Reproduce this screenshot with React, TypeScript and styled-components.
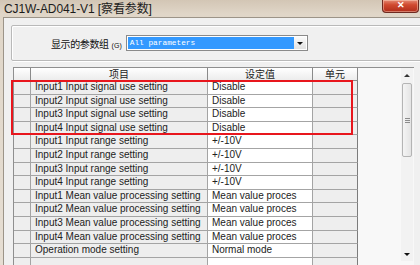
import React from 'react';
import styled, { createGlobalStyle } from 'styled-components';

const GlobalStyle = createGlobalStyle`
  html, body {
    margin: 0;
    padding: 0;
    background: #e2d9cc;
  }
  body {
    font-family: 'Liberation Sans', 'Noto Sans CJK SC', sans-serif;
  }
`;

interface IParam {
  name: string;
  value: string;
  unit?: string;
}

const params: IParam[] = [
  { name: 'Input1 Input signal use setting', value: 'Disable' },
  { name: 'Input2 Input signal use setting', value: 'Disable' },
  { name: 'Input3 Input signal use setting', value: 'Disable' },
  { name: 'Input4 Input signal use setting', value: 'Disable' },
  { name: 'Input1 Input range setting', value: '+/-10V' },
  { name: 'Input2 Input range setting', value: '+/-10V' },
  { name: 'Input3 Input range setting', value: '+/-10V' },
  { name: 'Input4 Input range setting', value: '+/-10V' },
  { name: 'Input1 Mean value processing setting', value: 'Mean value proces' },
  { name: 'Input2 Mean value processing setting', value: 'Mean value proces' },
  { name: 'Input3 Mean value processing setting', value: 'Mean value proces' },
  { name: 'Input4 Mean value processing setting', value: 'Mean value proces' },
  { name: 'Operation mode setting', value: 'Normal mode' },
  { name: '', value: '' },
];

const ROW_H = 13.6;
const COLS = '17px 177px 105px 45px 1fr';

const Style = {
  Window: styled.div`
    width: 420px;
    height: 265px;
    overflow: hidden;
    display: flex;
    flex-direction: column;
    background: linear-gradient(180deg, #d3c6b5 0%, #e0d6c8 14px, #e6ded3 100%);
  `,
  TitleBar: styled.div`
    height: 17px;
    flex: none;
    display: flex;
    justify-content: space-between;
    align-items: flex-start;
  `,
  Title: styled.span`
    padding: 2px 0 0 4px;
    font-size: 12px;
    line-height: 14px;
    color: #1b1b1b;
    letter-spacing: -0.1px;
  `,
  Close: styled.div`
    width: 35px;
    height: 12px;
    margin-right: 1px;
    border: 1px solid #6e2a20;
    border-top: none;
    border-radius: 0 0 4px 4px;
    background: linear-gradient(180deg, #e58a74 0%, #d04a30 40%, #b02c1a 100%);
    color: #fff;
    font-size: 9px;
    line-height: 11px;
    font-weight: bold;
    text-align: center;
    box-shadow: inset 0 0 0 1px rgba(255, 220, 200, 0.45);
  `,
  Client: styled.div`
    flex: 1;
    margin-left: 3px;
    border-top: 1px solid #9c9488;
    border-left: 1px solid #9c9488;
    background: #f0f0f0;
    padding: 7px 0 0 7px;
  `,
  GroupBox: styled.div`
    width: 401px;
    height: 34px;
    border: 1px solid #b9b9b9;
    border-radius: 2px;
    box-shadow: inset 1px 1px 0 #fff, 1px 1px 0 #fff;
    display: flex;
    align-items: center;
    padding-left: 39px;
    box-sizing: content-box;
  `,
  Label: styled.span`
    font-family: 'Noto Sans CJK SC', sans-serif;
    font-size: 10px;
    letter-spacing: -0.4px;
    color: #111;
    display: flex;
    align-items: baseline;
  `,
  Mnemonic: styled.span`
    font-family: 'Liberation Sans', sans-serif;
    font-size: 7px;
    margin-left: 3px;
    letter-spacing: 0;
  `,
  Combo: styled.div`
    margin-left: 4px;
    width: 182px;
    height: 16px;
    border: 1px solid #8a8a8a;
    background: #fff;
    display: flex;
    padding: 1px;
    box-sizing: border-box;
  `,
  ComboText: styled.div`
    flex: 1;
    background: #3399ff;
    color: #fff;
    font-family: 'Liberation Mono', monospace;
    font-size: 7.8px;
    line-height: 12px;
    padding-left: 2px;
  `,
  ComboButton: styled.div`
    width: 12px;
    display: flex;
    align-items: center;
    justify-content: center;
    background: linear-gradient(180deg, #fafafa, #e2e2e2);
  `,
  Arrow: styled.div<{ up?: boolean }>`
    width: 0;
    height: 0;
    border-left: 3px solid transparent;
    border-right: 3px solid transparent;
    ${({ up }) =>
      up ? 'border-bottom: 3px solid #333;' : 'border-top: 3px solid #111;'}
  `,
  TableBox: styled.div`
    margin: 6px 0 0 2px;
    width: 401px;
    height: 200px;
    display: flex;
    border-left: 1px solid #8f8f8f;
    border-top: 1px solid #8f8f8f;
    box-sizing: border-box;
    background: #f8f8f8;
  `,
  Grid: styled.div`
    position: relative;
    flex: 1;
    display: grid;
    grid-template-columns: ${COLS};
    grid-auto-rows: ${ROW_H}px;
    grid-template-rows: 13px;
    align-content: start;
  `,
  Head: styled.div<{ filler?: boolean }>`
    box-sizing: border-box;
    border-right: ${({ filler }) => (filler ? 'none' : '1px solid #8a8a8a')};
    border-bottom: ${({ filler }) => (filler ? 'none' : '1px solid #8a8a8a')};
    background: ${({ filler }) =>
      filler ? 'transparent' : 'linear-gradient(180deg, #ffffff, #ececec)'};
    font-family: 'Noto Sans CJK SC', sans-serif;
    font-size: 10px;
    line-height: 12px;
    text-align: center;
    color: #222;
    white-space: nowrap;
  `,
  Cell: styled.div<{ white?: boolean; dark?: boolean }>`
    box-sizing: border-box;
    border-right: 1px solid ${({ dark }) => (dark ? '#7c7c7c' : '#a4a4a4')};
    border-bottom: 1px solid #a4a4a4;
    background: ${({ white }) => (white ? '#ffffff' : '#eeeeee')};
    font-size: 10px;
    line-height: 12.6px;
    padding-left: 4px;
    color: #222;
    white-space: nowrap;
    overflow: hidden;
  `,
  Filler: styled.div``,
  Highlight: styled.div`
    position: absolute;
    left: -3px;
    top: 12px;
    width: 342px;
    height: 55px;
    border: 2px solid #e8161d;
    box-sizing: border-box;
    pointer-events: none;
  `,
  Scrollbar: styled.div`
    width: 12px;
    margin: 0 1px 6px 0;
    display: flex;
    flex-direction: column;
    align-items: center;
    background: #f2f2f2;
  `,
  ScrollArrow: styled.div`
    height: 14px;
    flex: none;
    display: flex;
    align-items: center;
    justify-content: center;
  `,
  Thumb: styled.div`
    margin-top: 1px;
    width: 10px;
    height: 74px;
    border: 1px solid #b4b4b4;
    border-radius: 2px;
    background: linear-gradient(90deg, #f4f4f4, #e4e4e4);
    box-sizing: border-box;
    display: flex;
    flex-direction: column;
    align-items: center;
    justify-content: center;
    gap: 1px;
  `,
  Grip: styled.div`
    width: 5px;
    height: 1px;
    background: #8c8c8c;
  `,
  Track: styled.div`
    flex: 1;
  `,
};

const App = () => {
  return (
    <>
      <GlobalStyle />
      <Style.Window>
        <Style.TitleBar>
          <Style.Title>CJ1W-AD041-V1 [察看参数]</Style.Title>
          <Style.Close>✕</Style.Close>
        </Style.TitleBar>
        <Style.Client>
          <Style.GroupBox>
            <Style.Label>
              显示的参数组<Style.Mnemonic>(G)</Style.Mnemonic>
            </Style.Label>
            <Style.Combo>
              <Style.ComboText>All parameters</Style.ComboText>
              <Style.ComboButton>
                <Style.Arrow />
              </Style.ComboButton>
            </Style.Combo>
          </Style.GroupBox>
          <Style.TableBox>
            <Style.Grid>
              <Style.Head />
              <Style.Head>项目</Style.Head>
              <Style.Head>设定值</Style.Head>
              <Style.Head>单元</Style.Head>
              <Style.Head filler />
              {params.map((p, i) => (
                <React.Fragment key={i}>
                  <Style.Cell />
                  <Style.Cell>{p.name}</Style.Cell>
                  <Style.Cell white>{p.value}</Style.Cell>
                  <Style.Cell dark>{p.unit}</Style.Cell>
                  <Style.Filler />
                </React.Fragment>
              ))}
              <Style.Highlight />
            </Style.Grid>
            <Style.Scrollbar>
              <Style.ScrollArrow>
                <Style.Arrow up />
              </Style.ScrollArrow>
              <Style.Thumb>
                <Style.Grip />
                <Style.Grip />
                <Style.Grip />
              </Style.Thumb>
              <Style.Track />
              <Style.ScrollArrow>
                <Style.Arrow />
              </Style.ScrollArrow>
            </Style.Scrollbar>
          </Style.TableBox>
        </Style.Client>
      </Style.Window>
    </>
  );
};

export default App;
